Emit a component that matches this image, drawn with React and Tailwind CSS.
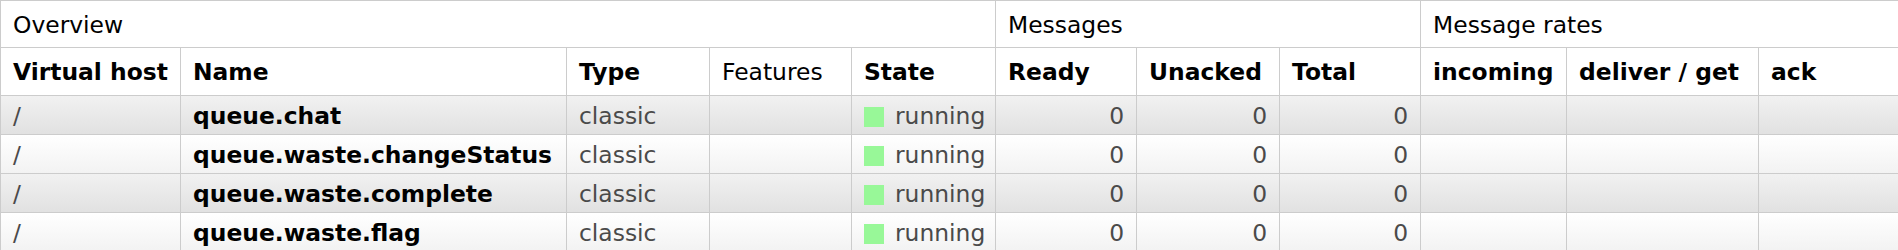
import React from 'react';

const queues = [
  'queue.chat',
  'queue.waste.changeStatus',
  'queue.waste.complete',
  'queue.waste.flag',
];

const widths = [180, 386, 143, 142, 144, 141, 143, 141, 146, 192, 200];

const th = 'border border-[#cccccc] px-[12px] pt-[2px] pb-0 text-left align-middle';

export default function App(){
  return (
    <div className="w-full overflow-hidden bg-white" style={{ fontFamily: '"DejaVu Sans", Verdana, sans-serif' }}>
      <table className="table-fixed border-collapse text-[23.4px] leading-[27px] text-black" style={{ width: widths.reduce((a,b)=>a+b,0) }}>
        <colgroup>
          {widths.map((w,i) => <col key={i} style={{ width: w }} />)}
        </colgroup>
        <thead>
          <tr className="h-[47px]">
            <th colSpan={5} className={`${th} font-normal`}>Overview</th>
            <th colSpan={3} className={`${th} font-normal`}>Messages</th>
            <th colSpan={3} className={`${th} font-normal`}>Message rates</th>
          </tr>
          <tr className="h-[48px]">
            <th className={`${th} font-bold`}>Virtual host</th>
            <th className={`${th} font-bold`}>Name</th>
            <th className={`${th} font-bold`}>Type</th>
            <th className={`${th} font-normal`}>Features</th>
            <th className={`${th} font-bold`}>State</th>
            <th className={`${th} font-bold`}>Ready</th>
            <th className={`${th} font-bold`}>Unacked</th>
            <th className={`${th} font-bold`}>Total</th>
            <th className={`${th} font-bold`}>incoming</th>
            <th className={`${th} font-bold whitespace-nowrap`}>deliver / get</th>
            <th className={`${th} font-bold`}>ack</th>
          </tr>
        </thead>
        <tbody className="text-[#4a4a4a]">
          {queues.map((q, i) => {
            const bg = i % 2 === 0
              ? 'bg-gradient-to-b from-[#f1f1f1] to-[#e1e1e1]'
              : 'bg-gradient-to-b from-white to-[#f2f2f2]';
            const td = 'border border-[#cccccc] px-[12px] pt-[2px] pb-0 align-middle whitespace-nowrap';
            return (
              <tr key={q} className={`h-[39px] ${bg}`}>
                <td className={td}>/</td>
                <td className={`${td} font-bold text-black`}>{q}</td>
                <td className={td}>classic</td>
                <td className={td}></td>
                <td className={td}>
                  <span className="inline-block w-[20px] h-[20px] bg-[#98f898] mr-[11px] align-[-3px]"></span>
                  running
                </td>
                <td className={`${td} text-right`}>0</td>
                <td className={`${td} text-right`}>0</td>
                <td className={`${td} text-right`}>0</td>
                <td className={td}></td>
                <td className={td}></td>
                <td className={td}></td>
              </tr>
            );
          })}
        </tbody>
      </table>
    </div>
  );
}
